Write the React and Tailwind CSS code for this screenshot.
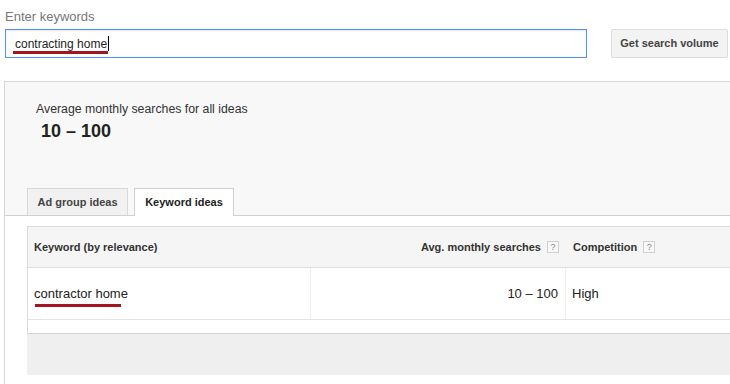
import React from 'react';

const FONT = "font-['Liberation_Sans',Arial,sans-serif]";

function HelpBox() {
    return (
        <span className="inline-flex items-center justify-center w-[12px] h-[12px] border border-[#d0d0d0] bg-[#f8f8f8] text-[9px] font-normal text-[#888] leading-none ml-[6px] align-middle">
            ?
        </span>
    );
}

export default function App() {
    return (
        <div className={`w-[730px] h-[384px] bg-white overflow-hidden ${FONT}`}>
            {/* search bar */}
            <div className="pl-[5px] pt-[8px] text-[13px] leading-[17px] text-[#777]">Enter keywords</div>
            <div className="flex items-center mt-[4px] pl-[5px]">
                <div className="relative w-[582px] h-[29px] border border-[#4d90fe] shadow-[inset_0_1px_2px_rgba(0,0,0,0.1)] flex items-center pl-[9px]">
                    <span className="relative text-[12px] text-[#222] leading-[16px]">
                        contracting home
                        <span className="absolute -right-[2px] top-[0px] w-[1px] h-[15px] bg-black" />
                        <span className="absolute -left-[2px] -right-[1px] top-[15px] h-[3px] bg-[#a3161f]" />
                    </span>
                </div>
                <button className="ml-[24px] w-[117px] h-[29px] bg-[#f3f3f3] border border-[#dcdcdc] rounded-[2px] text-[11px] font-bold text-[#444]">
                    Get search volume
                </button>
            </div>

            {/* results panel */}
            <div className="mt-[23px] ml-[4px] border-l border-t border-[#d6d6d6] h-[310px]">
                <div className="bg-[#f8f8f8] pt-[19px] h-[134px] flex flex-col">
                    <div className="pl-[31px] text-[12.3px] leading-[16px] text-[#333]">Average monthly searches for all ideas</div>
                    <div className="pl-[36px] mt-[4px] text-[18px] leading-[21px] font-bold text-[#222]">10 – 100</div>
                    <div className="mt-auto flex items-end pl-[22px] gap-[6px] border-b border-[#d0d0d0]">
                        <div className="w-[101px] h-[27px] border border-b-0 border-[#d8d8d8] bg-[#f1f1f1] flex items-center justify-center text-[11px] font-bold text-[#444]">
                            Ad group ideas
                        </div>
                        <div className="w-[100px] h-[28px] -mb-[1px] border border-b-0 border-[#d0d0d0] bg-white flex items-center justify-center text-[11px] font-bold text-[#222]">
                            Keyword ideas
                        </div>
                    </div>
                </div>

                {/* table */}
                <div className="ml-[22px] mt-[10px] w-[720px]">
                    <div className="border-l border-t border-[#dcdcdc]">
                        <div className="flex h-[41px] bg-[#f5f5f5] border-b border-[#dedede] text-[11px] font-bold text-[#333]">
                            <div className="w-[283px] flex items-center pl-[6px]">Keyword (by relevance)</div>
                            <div className="w-[255px] flex items-center justify-end pr-[7px]">
                                Avg. monthly searches<HelpBox />
                            </div>
                            <div className="flex-1 flex items-center pl-[7px]">
                                Competition<HelpBox />
                            </div>
                        </div>
                        <div className="flex h-[52px] border-b border-[#e4e4e4] text-[13px] text-[#222]">
                            <div className="w-[283px] flex items-center pl-[6px] border-r border-[#eeeeee]">
                                <span className="relative">
                                    contractor home
                                    <span className="absolute left-[1px] w-[86px] top-[20px] h-[3px] bg-[#a3161f]" />
                                </span>
                            </div>
                            <div className="w-[255px] flex items-center justify-end pr-[7px] border-r border-[#eeeeee]">10 – 100</div>
                            <div className="flex-1 flex items-center pl-[6px]">High</div>
                        </div>
                        <div className="h-[13px]" />
                    </div>
                    <div className="h-[42px] bg-[#efefef] border-t border-[#d4d4d4]" />
                </div>
            </div>
        </div>
    );
}
